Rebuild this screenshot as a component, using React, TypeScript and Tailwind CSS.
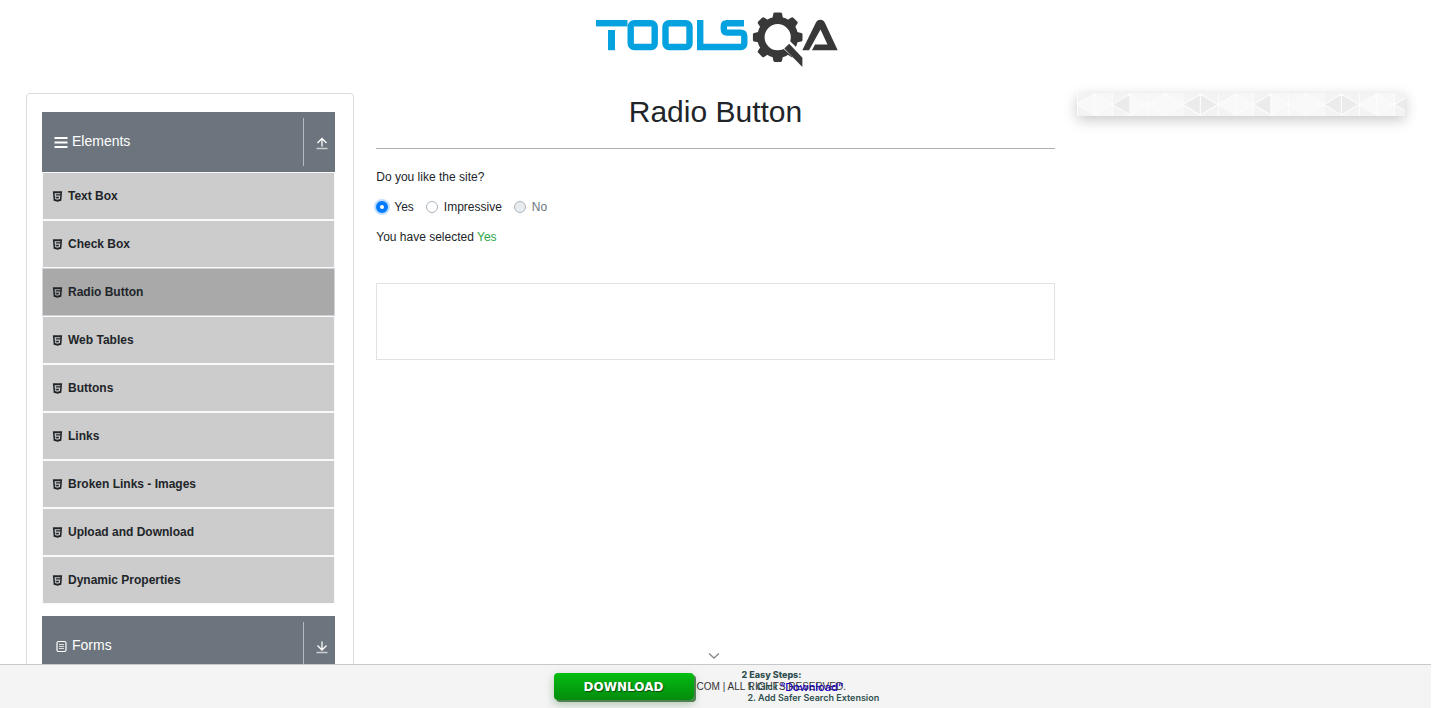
import { useState } from "react";
import { AiFillHtml5 } from "react-icons/ai";

const items = [
  "Text Box",
  "Check Box",
  "Radio Button",
  "Web Tables",
  "Buttons",
  "Links",
  "Broken Links - Images",
  "Upload and Download",
  "Dynamic Properties",
];

const teeth = [0, 45, 90, 135, 180, 225, 270, 315];

function Logo() {
  return (
    <svg
      width="243"
      height="58"
      viewBox="594 11 243 58"
      className="overflow-visible"
      role="img"
      aria-label="ToolsQA"
    >
      <g fill="none" stroke="#06a1df" strokeWidth="6.4">
        <path d="M596 23.2H627.5" />
        <path d="M611.5 30V50.2" strokeWidth="7" />
        <rect x="630.7" y="23.2" width="24" height="23.8" rx="3.5" />
        <rect x="665.5" y="23.2" width="24" height="23.8" rx="3.5" />
        <path d="M744 23.2H727Q723.8 23.2 723.8 26.4V28.8Q723.8 32.6 727 32.6H740.5Q744.3 32.6 744.3 36.4V43Q744.3 47 740.5 47H700.2V20" />
      </g>
      <g fill="#383838">
        {teeth.map((a) => (
          <path
            key={a}
            d="M772.3 19L773.4 13.6Q773.7 12.4 775 12.4H780.4Q781.7 12.4 782 13.6L783.1 19Z"
            transform={`rotate(${a} 777.7 37.2)`}
          />
        ))}
        <circle cx="777.7" cy="37.2" r="16.8" fill="none" stroke="#383838" strokeWidth="7.4" />
      </g>
      <path d="M782 47.5L790 41L807 58V70Z" fill="#fff" />
      <path d="M784.3 48.4L789.2 43.8L802.4 57.8V67Z" fill="#383838" />
      <path
        d="M802.3 50.2L815.7 23Q817.3 19.8 820.3 19.8Q823.4 19.8 825 23L837.7 50.2H812L815 44.5H827.5L820.5 29.5L809 50.2Z"
        fill="#383838"
      />
    </svg>
  );
}

function MenuIcon() {
  return (
    <svg width="14" height="13" viewBox="0 0 14 13" stroke="#fff" strokeWidth="2" aria-hidden="true">
      <path d="M.5 2H13.5M.5 6.5H13.5M.5 11H13.5" />
    </svg>
  );
}

function FormIcon() {
  return (
    <svg width="13" height="13" viewBox="0 0 13 13" fill="none" stroke="#fff" aria-hidden="true">
      <rect x="2" y="1.5" width="9" height="10" rx="1.5" strokeWidth="1.2" />
      <path d="M4 4.5H9M4 6.5H9M4 8.5H9" strokeOpacity=".75" />
    </svg>
  );
}

function ToggleIcon({ open }: { open: boolean }) {
  return (
    <svg width="12" height="13" viewBox="0 0 12 13" fill="none" stroke="#fff" aria-hidden="true">
      <path
        d={open ? "M6 9.5V1.5M1.5 6L6 1.5L10.5 6" : "M6 0.5V9M1.5 4.5L6 9L10.5 4.5"}
        strokeWidth="1.3"
      />
      <path d="M.5 11.5H11.5" strokeOpacity=".65" strokeWidth="1.5" />
    </svg>
  );
}

function GroupHeader({ label, open, icon }: { label: string; open: boolean; icon: React.ReactNode }) {
  return (
    <button
      type="button"
      aria-expanded={open}
      className="flex h-[60px] w-full items-center bg-[#6c757d] pl-3 text-left text-white"
    >
      <span className="flex flex-1 items-center gap-1 pb-0.5 text-[14px] leading-5">
        <span className="flex w-[14px] justify-center pt-0.5">{icon}</span>
        {label}
      </span>
      <span className="flex h-12 w-8 items-center justify-center border-l border-[#b5babe] pt-0.5 pl-1">
        <ToggleIcon open={open} />
      </span>
    </button>
  );
}

function PatternStrip() {
  return (
    <svg className="block h-[23px] w-full shadow-[0_4px_14px_rgba(0,0,0,0.22)]" aria-hidden="true">
      <defs>
        <pattern id="gems" width="141" height="23" patternUnits="userSpaceOnUse">
          <rect width="141" height="23" fill="#f7f7f7" />
          <path d="M0 0H17.6V23H0ZM35.3 0H52.9V23H35.3ZM105.8 0H141V23H105.8Z" fill="#f3f3f3" />
          <path
            d="M0 11.5L17.6 1V22ZM17.6 1L35.3 11.5L17.6 22ZM52.9 1L70.5 11.5L52.9 22ZM70.5 11.5L88.1 1L105.8 11.5L88.1 22Z"
            fill="#f9f9f9"
          />
          <path d="M35.3 11.5L52.9 1V22ZM105.8 11.5L123.4 1L141 11.5L123.4 22Z" fill="#ebebeb" />
          <path
            d="M0 11.5L17.6 1L35.3 11.5L52.9 1L70.5 11.5L88.1 1L105.8 11.5L123.4 1L141 11.5L123.4 22L105.8 11.5L88.1 22L70.5 11.5L52.9 22L35.3 11.5L17.6 22Z M17.6 0V23M35.3 0V23M52.9 0V23M70.5 0V23M88.1 0V23M105.8 0V23M123.4 0V23M.5 0V23"
            fill="none"
            stroke="#fcfcfc"
            strokeWidth="1.2"
          />
        </pattern>
      </defs>
      <rect width="100%" height="23" fill="url(#gems)" />
    </svg>
  );
}

const radioClass =
  "size-3 appearance-none rounded-full border border-[#adb5bd] bg-white checked:border-4 checked:border-[#007bff] checked:shadow-[0_0_0_2px_rgba(0,123,255,0.25)] disabled:bg-[#e9ecef]";

export default function App() {
  const [choice, setChoice] = useState("Yes");
  return (
    <div className="flex h-screen flex-col overflow-hidden bg-white pr-[9px] font-['Liberation_Sans',Arial,sans-serif] text-xs leading-[18px] text-[#212529]">
      <div className="relative min-h-0 flex-1 overflow-hidden">
        <header className="flex h-[93px] justify-center pt-[11px]">
          <a href="#" className="h-[58px]">
            <Logo />
          </a>
        </header>

        <div className="flex items-start px-[15px]">
          <div className="w-1/4 px-[11px]">
            <nav className="h-[900px] rounded border border-[#dcdcdc] pt-[18px] pr-[18px] pl-[15px]">
              <GroupHeader label="Elements" open icon={<MenuIcon />} />
              <ul className="mb-3">
                {items.map((item) => (
                  <li key={item}>
                    <a
                      href="#"
                      className={`flex h-12 items-center gap-1 border pl-2 font-bold ${
                        item === "Radio Button" ? "border-[#d0d4d8] bg-[#a9a9a9]" : "border-[#f8f9fa] bg-[#ccc]"
                      }`}
                    >
                      <AiFillHtml5 size={13} />
                      {item}
                    </a>
                  </li>
                ))}
              </ul>
              <GroupHeader label="Forms" open={false} icon={<FormIcon />} />
            </nav>
          </div>

          <main className="w-1/2 px-[11px]">
            <h1 className="pb-[18px] text-center text-3xl leading-[37px]">Radio Button</h1>
            <hr className="border-[#b0b0b0]" />
            <fieldset className="pt-[19px]">
              <legend className="float-left mb-3 w-full">Do you like the site?</legend>
              <div className="clear-both mb-3 flex gap-3">
                {["Yes", "Impressive", "No"].map((o) => (
                  <label key={o} className={`flex items-center gap-1.5 ${o === "No" ? "text-[#6c757d]" : ""}`}>
                    <input
                      type="radio"
                      name="like"
                      checked={choice === o}
                      disabled={o === "No"}
                      onChange={() => setChoice(o)}
                      className={radioClass}
                    />
                    {o}
                  </label>
                ))}
              </div>
            </fieldset>
            <p>
              You have selected <span className="text-[#28a745]">{choice}</span>
            </p>
            <div className="mt-[37px] h-[77px] border border-[#e2e2e2]" />
          </main>

          <aside className="w-1/4 px-[11px]">
            <PatternStrip />
          </aside>
        </div>

        <button type="button" aria-label="Collapse" className="absolute bottom-1 left-1/2 -ml-2 h-2 w-3">
          <svg width="12" height="8" viewBox="0 0 12 8" fill="none" stroke="#8a8a8a" strokeWidth="1.4">
            <path d="M1 1.5L6 6L11 1.5" />
          </svg>
        </button>
      </div>

      <footer className="relative flex h-11 shrink-0 items-center justify-center border-t border-[#c8c8c8] bg-[#f4f4f4]">
        <span className="text-[10px] text-[#333]">© 2013-2020 TOOLSQA.COM | ALL RIGHTS RESERVED.</span>
        <div className="absolute inset-y-0 left-1/2 -ml-[162px] flex items-start gap-12 pt-2">
          <button
            type="button"
            className="h-[27px] w-[140px] rounded-sm bg-linear-to-b from-[#03bd12] to-[#048c0c] font-['DejaVu_Sans',sans-serif] text-xs font-bold text-white shadow-[2px_2px_0_#4f7f52,0_4px_10px_rgba(0,80,0,0.3)] [text-shadow:1px_1px_1px_rgba(0,0,0,0.5)]"
          >
            DOWNLOAD
          </button>
          <div className="-mt-1 font-[Inter] text-[9px] font-semibold leading-3 whitespace-nowrap text-[#2f4f4f]">
            <p className="font-extrabold">2 Easy Steps:</p>
            <ol className="pl-1.5">
              <li className="flex h-[11px] items-center gap-0.5">
                1. Click <span className="text-[11px] font-medium text-[#1a00b8]">“Download”</span>
              </li>
              <li>2. Add Safer Search Extension</li>
            </ol>
          </div>
        </div>
      </footer>
    </div>
  );
}
